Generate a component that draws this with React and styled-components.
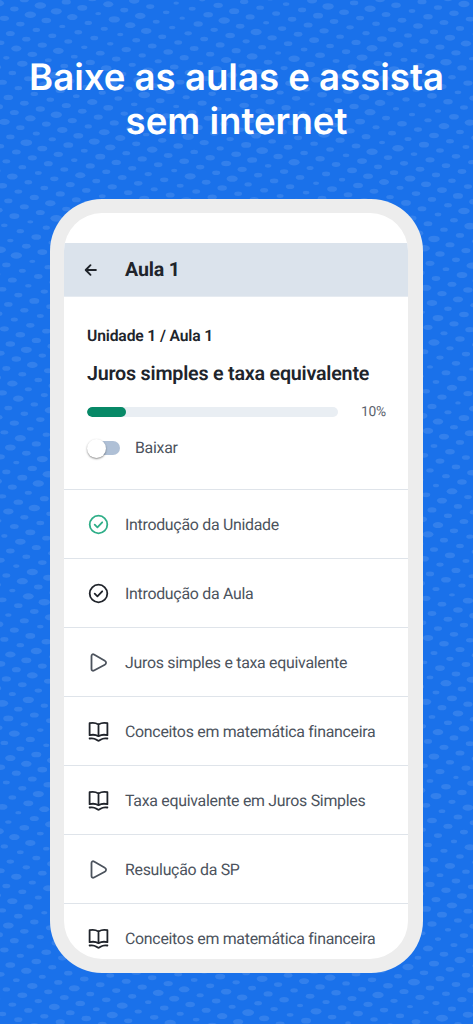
import React from 'react';
import styled, { createGlobalStyle } from 'styled-components';

const GlobalStyle = createGlobalStyle`
    * {
        box-sizing: border-box;
    }

    body {
        margin: 0;
        background-color: #1a71ea;
    }
`;

const Page = styled.main`
    position: relative;
    width: 473px;
    height: 1024px;
    overflow: hidden;
    background-color: #1a71ea;
    font-family: Roboto, sans-serif;
    text-rendering: geometricPrecision;
`;

const Pattern = styled.svg`
    position: absolute;
    top: 0;
    left: 0;
    fill: #ffffff;
    fill-opacity: 0.11;
`;

const Content = styled.div`
    position: relative;
    display: flex;
    flex-direction: column;
    align-items: center;
    padding-top: 56px;
`;

const Headline = styled.h1`
    margin: 0;
    height: 143px;
    color: #ffffff;
    font-family: Inter, sans-serif;
    font-size: 36.6px;
    font-weight: 600;
    line-height: 43.5px;
    text-align: center;
    white-space: nowrap;
`;

const Phone = styled.div`
    width: 373px;
    height: 774px;
    padding: 14px 15px 14px 14px;
    border-radius: 52px;
    background-color: #ededed;
`;

const Screen = styled.div`
    height: 746px;
    padding-top: 30px;
    border-radius: 38px;
    background-color: #ffffff;
    overflow: hidden;
`;

const TopBar = styled.header`
    display: flex;
    align-items: center;
    height: 54px;
    padding-left: 20px;
    background-color: #dbe3ec;
    border-bottom: 1px solid #e6ebf1;
`;

const TopBarTitle = styled.h2`
    margin: 0 0 0 27px;
    padding-top: 1px;
    color: #20242b;
    font-size: 19.6px;
    font-weight: 700;
    line-height: 24px;
    letter-spacing: -0.15px;
`;

const Summary = styled.section`
    height: 192px;
    padding: 29px 22px 0 23px;
`;

const Breadcrumb = styled.p`
    margin: 0;
    color: #20242b;
    font-size: 15.7px;
    font-weight: 600;
    line-height: 20px;
    letter-spacing: -0.15px;
`;

const LessonTitle = styled.h3`
    margin: 15px 0 0;
    color: #20242b;
    font-size: 19.7px;
    font-weight: 600;
    line-height: 26px;
    letter-spacing: -0.22px;
    white-space: nowrap;
`;

const ProgressRow = styled.div`
    display: flex;
    align-items: center;
    justify-content: space-between;
    margin-top: 15px;
    height: 20px;
    color: #5b626c;
    font-size: 13.8px;
    line-height: 20px;
    letter-spacing: -0.2px;
`;

const ProgressTrack = styled.div`
    width: 251px;
    height: 10px;
    border-radius: 5px;
    background-color: #e9eef3;
    overflow: hidden;
`;

const ProgressFill = styled.div`
    width: ${(props) => props.$width}px;
    height: 100%;
    border-radius: 5px;
    background-color: #078967;
`;

const DownloadRow = styled.div`
    display: flex;
    align-items: center;
    margin-top: 16px;
    height: 20px;
    color: #4c535d;
    font-size: 15.9px;
    line-height: 20px;
    letter-spacing: -0.28px;
`;

const Switch = styled.div`
    display: flex;
    align-items: center;
    width: 33px;
    height: 14px;
    margin-right: 15px;
    border-radius: 7px;
    background: linear-gradient(to right, transparent 9px, #afc0d6 9px);
`;

const SwitchThumb = styled.div`
    width: 19px;
    height: 19px;
    border-radius: 50%;
    background-color: #ffffff;
    box-shadow: 0 1px 2px rgba(0, 0, 0, 0.45);
`;

const LessonRow = styled.div`
    display: flex;
    align-items: center;
    height: 69px;
    padding-left: 23px;
    border-top: 1px solid #dfe4ea;
`;

const LessonName = styled.span`
    padding-top: 1px;
    color: #4c535d;
    font-size: 15.9px;
    line-height: 20px;
    letter-spacing: -0.28px;
    white-space: nowrap;
`;

const LessonIcon = styled.svg`
    flex: none;
    width: 23px;
    height: 23px;
    margin-right: 15px;
    color: ${(props) => props.$color};
    fill: none;
    stroke: currentColor;
    stroke-width: 1.8;
    stroke-linecap: round;
    stroke-linejoin: round;
`;

const BackArrow = styled.svg`
    width: 14px;
    height: 14px;
    fill: none;
    stroke: #20242b;
    stroke-width: 1.9;
    stroke-linecap: round;
    stroke-linejoin: round;
`;

const lessons = [
    { icon: 'check', color: '#2fae88', title: 'Introdução da Unidade' },
    { icon: 'check', color: '#20242b', title: 'Introdução da Aula' },
    { icon: 'play', color: '#4c535d', title: 'Juros simples e taxa equivalente' },
    { icon: 'book', color: '#20242b', title: 'Conceitos em matemática financeira' },
    { icon: 'book', color: '#20242b', title: 'Taxa equivalente em Juros Simples' },
    { icon: 'play', color: '#4c535d', title: 'Resulução da SP' },
    { icon: 'book', color: '#20242b', title: 'Conceitos em matemática financeira' },
];

const iconShapes = {
    check: (
        <>
            <circle cx="11.5" cy="11.5" r="8.8" />
            <path d="M7.7 11.7l2.7 2.6 4.8-5" />
        </>
    ),
    play: (
        <path d="M4.5 5v13c0 1.500 1.200 2.100 2.500 1.500l10.800-5.800c1.700-.9 1.700-3 0-3.900L7 3.500C5.700 2.900 4.500 3.500 4.500 5z" />
    ),
    book: (
        <>
            <path d="M11.5 4.400C9 2.900 5.600 2.500 2.600 3.200v12c2.900-.7 6.300-.5 8.900 1 2.600-1.500 6-1.700 8.900-1v-12c-3-.7-6.400-.3-8.900 1.200zM11.500 4.400v11.800" />
            <path d="M2.600 18.500c2.600-.5 5-.1 6.900 1.200l1.200.8c.5.300 1.100.3 1.600 0l1.200-.8c1.900-1.300 4.300-1.700 6.900-1.200" />
        </>
    ),
};

// slanted grid of ovals, every one a little wider or narrower
const getDots = () => {
    const dots = [];

    for (let row = -35; row < 90; row++) {
        for (let col = -20; col < 90; col++) {
            const x = 14.33 + col * 15.987 - row * 9.992;
            const y = 9 + col * 5.802 + row * 9.313;

            if (x > -7 && x < 480 && y > -5 && y < 1029) {
                const wide = Math.abs(Math.sin(col * 12.99 + row * 78.23) * 437.58) % 1;
                const narrow = Math.abs(Math.sin(col * 39.35 + row * 11.14) * 951.13) % 1;
                dots.push({ x, y, rx: 4.3 + wide * 1.8 - narrow * 1.7 });
            }
        }
    }

    return dots;
};

const dots = getDots();

const App = () => (
    <Page>
        <GlobalStyle />
        <Pattern width="473" height="1024" viewBox="0 0 473 1024">
            {dots.map(({ x, y, rx }) => (
                <ellipse key={`${x},${y}`} cx={x} cy={y} rx={rx} ry={rx * 0.57} />
            ))}
        </Pattern>
        <Content>
            <Headline>
                Baixe as aulas e assista
                <br />
                sem internet
            </Headline>
            <Phone>
                <Screen>
                    <TopBar>
                        <BackArrow viewBox="0 0 14 14">
                            <path d="M11.9 7H2M6.5 2.2L1.7 7l4.8 4.800" />
                        </BackArrow>
                        <TopBarTitle>Aula 1</TopBarTitle>
                    </TopBar>
                    <Summary>
                        <Breadcrumb>Unidade 1 / Aula 1</Breadcrumb>
                        <LessonTitle>Juros simples e taxa equivalente</LessonTitle>
                        <ProgressRow>
                            <ProgressTrack>
                                <ProgressFill $width={39} />
                            </ProgressTrack>
                            <span>10%</span>
                        </ProgressRow>
                        <DownloadRow>
                            <Switch>
                                <SwitchThumb />
                            </Switch>
                            Baixar
                        </DownloadRow>
                    </Summary>
                    {lessons.map(({ icon, color, title }, index) => (
                        <LessonRow key={index}>
                            <LessonIcon $color={color} viewBox="0 0 23 23">
                                {iconShapes[icon]}
                            </LessonIcon>
                            <LessonName>{title}</LessonName>
                        </LessonRow>
                    ))}
                </Screen>
            </Phone>
        </Content>
    </Page>
);

export default App;
